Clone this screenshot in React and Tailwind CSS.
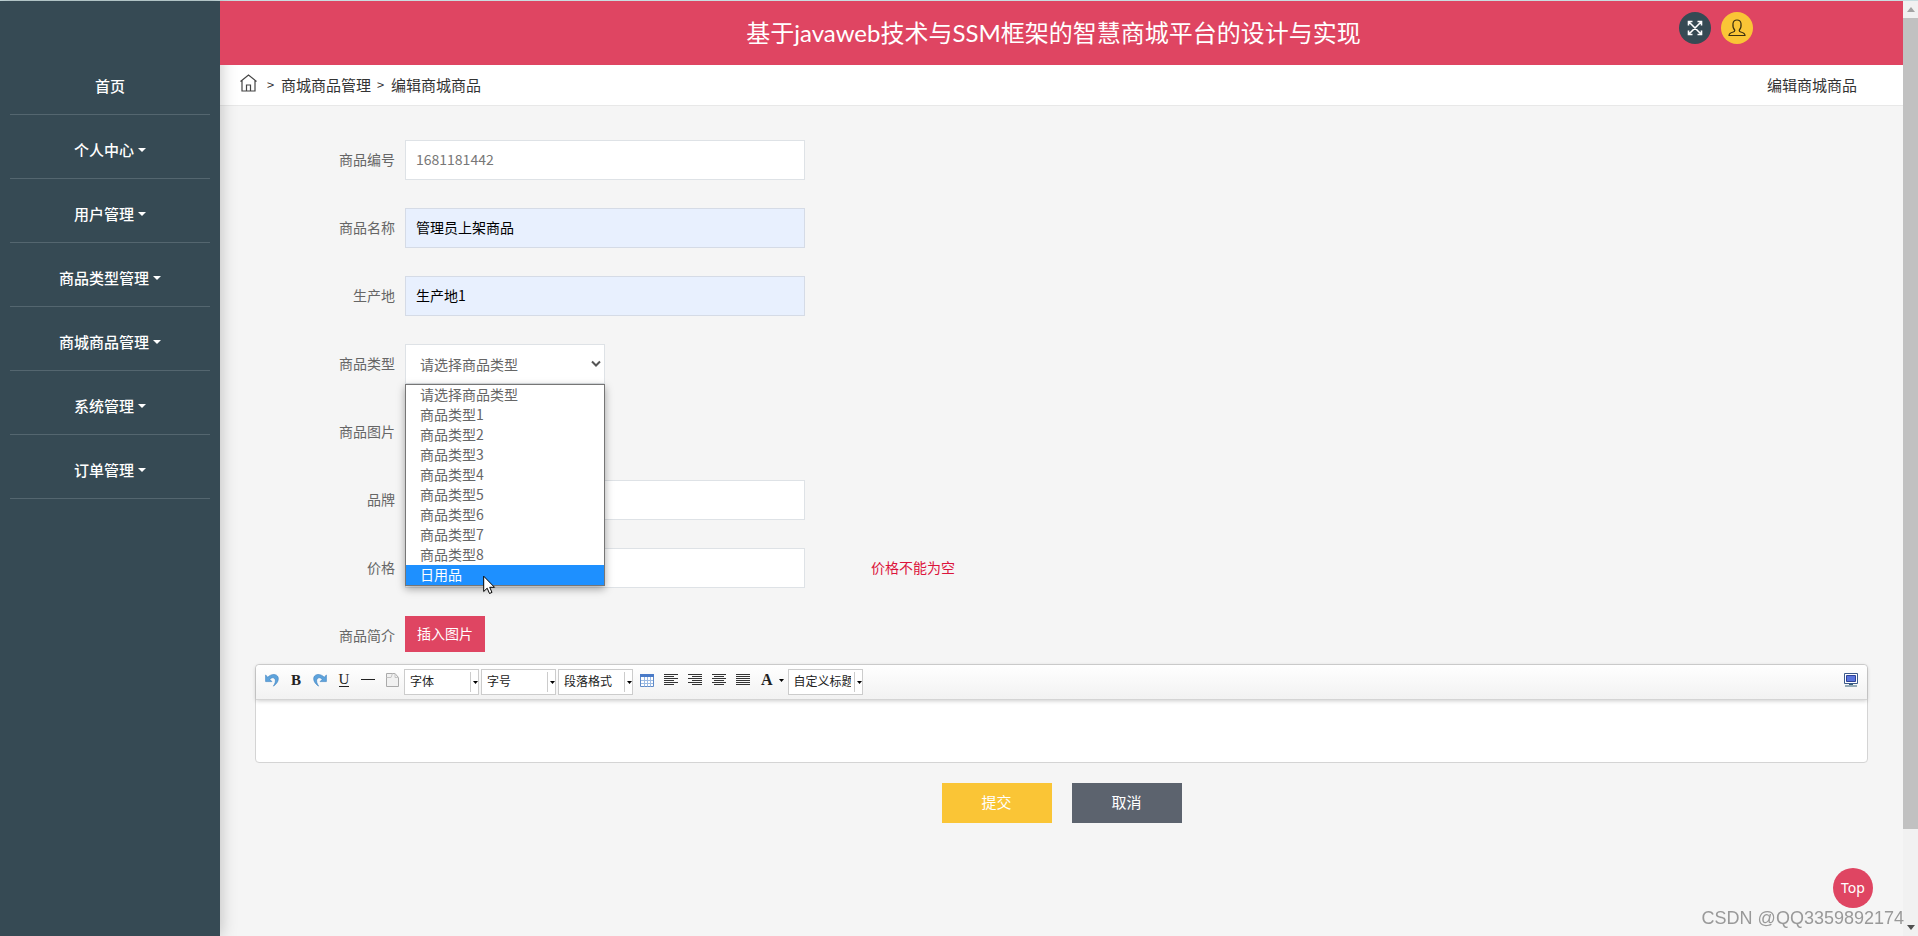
import React, { useState } from "react";

const navItems = [
  { label: "首页", caret: false },
  { label: "个人中心", caret: true },
  { label: "用户管理", caret: true },
  { label: "商品类型管理", caret: true },
  { label: "商城商品管理", caret: true },
  { label: "系统管理", caret: true },
  { label: "订单管理", caret: true },
];

const typeOptions = [
  "请选择商品类型",
  "商品类型1",
  "商品类型2",
  "商品类型3",
  "商品类型4",
  "商品类型5",
  "商品类型6",
  "商品类型7",
  "商品类型8",
  "日用品",
];

const App = () => {
  const [form, setForm] = useState({
    name: "管理员上架商品",
    place: "生产地1",
    type: "请选择商品类型",
    brand: "",
    price: "",
  });
  const [typeOpen, setTypeOpen] = useState(true);
  const [hovered, setHovered] = useState("日用品");

  const update = (key) => (e) => setForm({ ...form, [key]: e.target.value });

  return (
    <div className="flex min-h-screen border-t border-[#c9dde0] bg-[#f5f5f5] font-['Noto_Sans_CJK_SC','Noto_Sans',sans-serif] text-sm text-[#666]">
      {/* Sidebar */}
      <aside className="z-10 w-[220px] shrink-0 bg-[#364a54] px-2.5 pt-[50px] shadow-[0_0_16px_rgba(0,0,0,0.25)]">
        <nav>
          <ul>
            {navItems.map((item) => (
              <li
                key={item.label}
                className="flex h-16 items-end justify-center border-b border-[#54666f] pb-4"
              >
                <a
                  href="#"
                  className="flex items-center gap-1 text-[15px] leading-6 font-medium text-white"
                >
                  {item.label}
                  {item.caret && (
                    <svg width="8" height="4" viewBox="0 0 8 4" fill="currentColor">
                      <path d="M0 0h8L4 4z" />
                    </svg>
                  )}
                </a>
              </li>
            ))}
          </ul>
        </nav>
      </aside>

      {/* Main */}
      <div className="min-w-0 flex-1">
        <header className="relative z-20 grid h-16 items-center bg-[#df4562] text-white">
          <h1 className="col-start-1 row-start-1 pr-4 text-center font-['Lato','Noto_Sans_CJK_SC',sans-serif] text-2xl leading-8">
            基于javaweb技术与SSM框架的智慧商城平台的设计与实现
          </h1>
          <div className="col-start-1 row-start-1 flex justify-end gap-2.5 pr-[150px] pb-2.5">
            <button
              aria-label="全屏"
              className="flex size-8 items-center justify-center rounded-full bg-[#364a54]"
            >
              <ExpandIcon />
            </button>
            <button
              aria-label="用户"
              className="flex size-8 items-center justify-center rounded-full bg-[#fac536] text-[#333]"
            >
              <UserIcon />
            </button>
          </div>
        </header>

        <div className="flex h-[41px] items-center justify-between border-b border-[#e8e8e8] bg-white pr-[46px] pl-5 text-[15px] text-[#333]">
          <div className="flex items-center">
            <a href="#" aria-label="首页" className="mr-2.5 pb-1">
              <HomeIcon />
            </a>
            <span className="w-3.5 text-[13px]">&gt;</span>
            <a href="#">商城商品管理</a>
            <span className="ml-1.5 w-3.5 text-[13px]">&gt;</span>
            <span>编辑商城商品</span>
          </div>
          <span>编辑商城商品</span>
        </div>

        <form className="px-[35px] pt-[34px]" onSubmit={(e) => e.preventDefault()}>
          <div className="space-y-7">
            <Row label="商品编号" id="code">
              <input
                id="code"
                readOnly
                placeholder="1681181442"
                className="h-10 w-[400px] border border-[#dee2e6] bg-white px-2.5 pb-0.5 placeholder:text-[#777]"
              />
            </Row>
            <Row label="商品名称" id="name">
              <input
                id="name"
                value={form.name}
                onChange={update("name")}
                className="h-10 w-[400px] border border-[#d5dbe6] bg-[#e8f0fe] px-2.5 pb-0.5 text-black"
              />
            </Row>
            <Row label="生产地" id="place">
              <input
                id="place"
                value={form.place}
                onChange={update("place")}
                className="h-10 w-[400px] border border-[#d5dbe6] bg-[#e8f0fe] px-2.5 pb-0.5 text-black"
              />
            </Row>

            <Row label="商品类型" id="type">
              <div className="relative w-[200px]">
                <select
                  id="type"
                  value={form.type}
                  onChange={update("type")}
                  onMouseDown={(e) => {
                    e.preventDefault();
                    setTypeOpen(!typeOpen);
                  }}
                  className="block h-10 w-full appearance-none border border-[#dee2e6] bg-white pr-6 pl-3.5"
                >
                  {typeOptions.map((t) => (
                    <option key={t}>{t}</option>
                  ))}
                </select>
                <svg
                  className="pointer-events-none absolute top-4 right-1"
                  width="10"
                  height="8"
                  viewBox="0 0 10 8"
                  fill="none"
                  stroke="#555"
                  strokeWidth="2"
                >
                  <path d="M1 1.5l4 4 4-4" />
                </svg>

                {typeOpen && (
                  <ul
                    role="listbox"
                    className="absolute top-full left-0 z-10 w-full border border-[#767676] bg-white shadow-[0_3px_8px_rgba(0,0,0,0.35)]"
                  >
                    {typeOptions.map((t) => (
                      <li
                        key={t}
                        role="option"
                        aria-selected={form.type === t}
                        onMouseEnter={() => setHovered(t)}
                        onClick={() => {
                          setForm({ ...form, type: t });
                          setTypeOpen(false);
                        }}
                        className={`pb-0.5 pl-3.5 leading-[18px] ${
                          hovered === t ? "bg-[#1e90ff] text-white" : ""
                        }`}
                      >
                        {t}
                      </li>
                    ))}
                    <li aria-hidden="true" className="pointer-events-none absolute -bottom-2.5 left-[77px]">
                      <PointerIcon />
                    </li>
                  </ul>
                )}
              </div>
            </Row>

            <Row label="商品图片" />

            <Row label="品牌" id="brand">
              <input
                id="brand"
                value={form.brand}
                onChange={update("brand")}
                className="h-10 w-[400px] border border-[#dee2e6] bg-white px-2.5 pb-0.5"
              />
            </Row>
            <Row label="价格" id="price">
              <input
                id="price"
                value={form.price}
                onChange={update("price")}
                className="h-10 w-[400px] border border-[#dee2e6] bg-white px-2.5 pb-0.5"
              />
              <span className="ml-14 pb-0.5 text-[#dc143c]">价格不能为空</span>
            </Row>
            <Row label="商品简介">
              <button type="button" className="mb-1 h-9 w-20 bg-[#df4562] pb-0.5 text-white">
                插入图片
              </button>
            </Row>
          </div>

          {/* Editor */}
          <div className="mt-2 rounded border border-[#d4d4d4] bg-white">
            <div className="flex h-[35px] items-start rounded-t border-b border-[#d4d4d4] bg-gradient-to-b from-white to-[#f2f2f2] px-1 pt-1 text-[#222] shadow-[0_1px_4px_rgba(0,0,0,0.2)]">
              <ToolButton label="撤销">
                <UndoIcon />
              </ToolButton>
              <ToolButton label="加粗">
                <span className="font-['Liberation_Serif',serif] text-[15px] leading-4 font-bold">B</span>
              </ToolButton>
              <ToolButton label="重做">
                <UndoIcon flip />
              </ToolButton>
              <ToolButton label="下划线">
                <span className="border-b border-[#222] font-['Liberation_Serif',serif] text-[15px] leading-[13px]">
                  U
                </span>
              </ToolButton>
              <ToolButton label="分隔线">
                <svg width="14" height="14" viewBox="0 0 14 14">
                  <path d="M0 6.5h14" stroke="#222" />
                </svg>
              </ToolButton>
              <ToolButton label="清空文档">
                <PageIcon />
              </ToolButton>

              <div className="flex gap-0.5">
                <Combo label="字体" />
                <Combo label="字号" />
                <Combo label="段落格式" />
              </div>

              <div className="ml-0.5 flex">
                <ToolButton label="表格">
                  <TableIcon />
                </ToolButton>
                <ToolButton label="居左对齐">
                  <LinesIcon d="M0 1.5h14M0 3.5h10M0 5.5h14M0 7.5h10M0 9.5h14M0 11.5h10" />
                </ToolButton>
                <ToolButton label="居右对齐">
                  <LinesIcon d="M0 1.5h14M4 3.5h10M0 5.5h14M4 7.5h10M0 9.5h14M4 11.5h10" />
                </ToolButton>
                <ToolButton label="居中对齐">
                  <LinesIcon d="M0 1.5h14M2 3.5h10M0 5.5h14M2 7.5h10M0 9.5h14M2 11.5h10" />
                </ToolButton>
                <ToolButton label="两端对齐">
                  <LinesIcon d="M0 1.5h14M0 3.5h14M0 5.5h14M0 7.5h14M0 9.5h14M0 11.5h14" />
                </ToolButton>
                <button
                  type="button"
                  aria-label="字体颜色"
                  className="mr-1 flex h-[22px] items-center gap-1.5 pl-1.5 font-['Liberation_Serif',serif] text-base font-bold"
                >
                  A
                  <DownArrow />
                </button>
              </div>
              <Combo label="自定义标题" />

              <div className="ml-auto">
                <ToolButton label="全屏">
                  <MonitorIcon />
                </ToolButton>
              </div>
            </div>
            <textarea
              aria-label="商品简介"
              className="block h-[62px] w-full resize-none rounded-b bg-transparent p-2 outline-none"
            />
          </div>

          <div className="mt-5 flex justify-center gap-5 text-[15px] text-white">
            <button type="submit" className="h-10 w-[110px] bg-[#fac536] pb-0.5">
              提交
            </button>
            <button type="button" className="h-10 w-[110px] bg-[#5c636e] pb-0.5">
              取消
            </button>
          </div>
        </form>
      </div>

      {/* Scrollbar */}
      <div className="flex w-[15px] shrink-0 flex-col items-center bg-[#f1f1f1]">
        <svg className="my-1.5 shrink-0" width="8" height="5" viewBox="0 0 8 5" fill="#a3a3a3">
          <path d="M0 5h8L4 0z" />
        </svg>
        <div className="w-full grow-[9] bg-[#c1c1c1]" />
        <div className="grow" />
        <svg className="my-1.5 shrink-0" width="8" height="5" viewBox="0 0 8 5" fill="#505050">
          <path d="M0 0h8L4 5z" />
        </svg>
      </div>

      <a
        href="#"
        className="fixed right-[45px] bottom-7 z-30 flex size-10 items-center justify-center rounded-full bg-[#df4562] font-['Noto_Sans',sans-serif] text-sm text-white"
      >
        Top
      </a>
      <p className="fixed right-3.5 bottom-2 z-30 font-['Liberation_Sans',sans-serif] text-lg leading-5 text-[#999]">
        CSDN @QQ3359892174
      </p>
    </div>
  );
};

const Row = ({ label, id, children }) => (
  <div className="flex h-10 items-center gap-2.5">
    <label htmlFor={id} className="w-[140px] shrink-0 pb-0.5 text-right">
      {label}
    </label>
    {children}
  </div>
);

const ToolButton = ({ label, children }) => (
  <button
    type="button"
    aria-label={label}
    className="flex h-[22px] w-6 items-center justify-center"
  >
    {children}
  </button>
);

const Combo = ({ label }) => (
  <div className="relative h-[26px] w-[75px] border border-[#ccc] bg-white">
    <select
      aria-label={label}
      className="block h-full w-[62px] appearance-none overflow-hidden pb-0.5 pl-[5px] text-xs text-[#222]"
    >
      <option>{label}</option>
    </select>
    <span className="pointer-events-none absolute top-0.5 right-0 flex h-5 w-2 items-center justify-end border-l border-[#ccc]">
      <DownArrow />
    </span>
  </div>
);

// ================= ICONS =================
const DownArrow = () => (
  <svg width="5" height="3" viewBox="0 0 5 3" fill="#000">
    <path d="M0 0h5L2.5 3z" />
  </svg>
);

const LinesIcon = ({ d }) => (
  <svg width="14" height="14" viewBox="0 0 14 14" stroke="#333">
    <path d={d} />
  </svg>
);

const HomeIcon = () => (
  <svg width="17" height="18" viewBox="0 0 17 18" fill="none" stroke="#444" strokeWidth="1.2">
    <path d="M.5 7.5l8-6.5 8 6.5M2 6.5v10.5h13V6.5M6.5 17v-6h4v6" />
  </svg>
);

const ExpandIcon = () => (
  <svg width="16" height="16" viewBox="0 0 16 16" fill="none" stroke="#fff" strokeWidth="1.6">
    <path d="M1.5 1.5l13 13M14.5 1.5l-13 13M1.5 5.5v-4h4M10.5 1.5h4v4M14.5 10.5v4h-4M5.5 14.5h-4v-4" />
  </svg>
);

const UserIcon = () => (
  <svg width="18" height="18" viewBox="0 0 18 18" fill="none" stroke="#3b3010" strokeWidth="1.2">
    <path d="M6.8 11.2C5 9.5 4.7 7 5 4.5 5.3 2.2 6.800 1 9 1s3.700 1.200 4 3.500c.3 2.500 0 5-1.800 6.700 0 1 .3 1.500 1.500 1.800 2.500.6 4.300 1.500 4.300 3.500H1c0-2 1.800-2.900 4.300-3.500 1.200-.3 1.500-.8 1.500-1.800z" />
  </svg>
);

const UndoIcon = ({ flip }) => (
  <svg
    width="14"
    height="14"
    viewBox="0 0 14 14"
    className={flip ? "-scale-x-100" : ""}
    fill="#5da3dc"
    stroke="#3b7fbf"
    strokeWidth=".6"
  >
    <path d="M.6 2v6.600h6.300L4.700 6.300C6.500 4.300 9 4.200 10 6c.9 1.900.2 4.500-1.600 7.100 3.600-2.300 5.600-5.800 4.700-8.800C12 .8 6.500.3 2.800 4.200z" />
  </svg>
);

const PageIcon = () => (
  <svg width="13" height="14" viewBox="0 0 13 14" fill="#f1f1f1" stroke="#aaa">
    <path d="M.5.5h8.500l3.500 4v9H.5z" />
    <path d="M9 .5v4h3.500M.5 4.500H5l1.500-4" fill="none" stroke="#c4c4c4" />
  </svg>
);

const TableIcon = () => (
  <svg width="14" height="13" viewBox="0 0 14 13">
    <path d="M.5.5h13v12H.5z" fill="#fff" stroke="#5f8ac7" />
    <path d="M0 0h14v3H0z" fill="#4a7bc8" />
    <path d="M4.500 3v9.500M7.500 3v9.500M10.500 3v9.500M1 6.500h12M1 9.500h12" stroke="#9dbbe3" />
  </svg>
);

const MonitorIcon = () => (
  <svg width="14" height="14" viewBox="0 0 14 14">
    <path d="M.5.5h13v10H.5z" fill="#fff" stroke="#3c5a8a" />
    <path d="M2.500 2.500h9v6h-9z" fill="#5a74dc" stroke="#2f4396" />
    <path d="M5 11.500h4M1 13h12" stroke="#35607a" strokeWidth="1.200" />
  </svg>
);

const PointerIcon = () => (
  <svg width="13" height="20" viewBox="0 0 13 20" fill="#fff" stroke="#000">
    <path d="M.7 1.200v15.300l3.500-3.300 2.300 5.300 2.500-1.100-2.300-5.100h4.800z" />
  </svg>
);

export default App;
